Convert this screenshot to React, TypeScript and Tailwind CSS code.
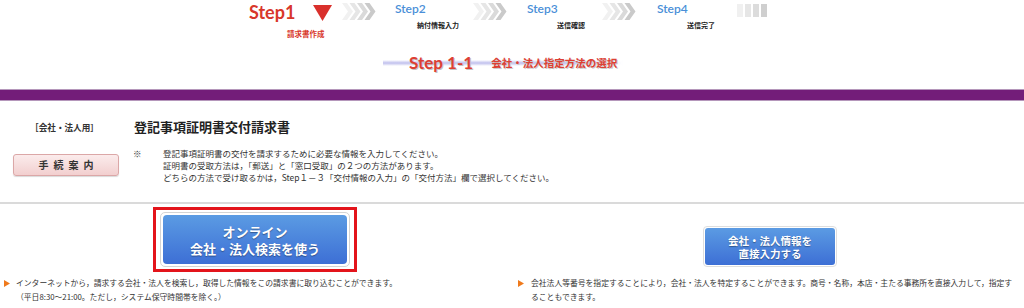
import React from "react";

const jp = "font-['Noto_Sans_CJK_JP','Noto_Sans',sans-serif]";
const latin = "font-['Lato','Noto_Sans_CJK_JP',sans-serif]";

function Chevrons() {
  const cols = ["#f1f1f1", "#e6e6e6", "#dadada", "#cacaca"];
  return (
    <svg width="34" height="17" viewBox="0 0 34 17" className="shrink-0">
      {cols.map((c, i) => {
        const x = i * 7.5;
        return (
          <polygon
            key={i}
            fill={c}
            points={`${x},0 ${x + 5},0 ${x + 11},8.5 ${x + 5},17 ${x},17 ${x + 6},8.5`}
          />
        );
      })}
    </svg>
  );
}

function Bars() {
  return (
    <div className="flex gap-[2px] mt-[4px]">
      <div className="w-[6px] h-[13px] bg-[#f0f0f0]" />
      <div className="w-[6px] h-[13px] bg-[#e6e6e6]" />
      <div className="w-[6px] h-[13px] bg-[#dcdcdc]" />
      <div className="w-[6px] h-[13px] bg-[#cfcfcf]" />
    </div>
  );
}

function StepLabel({ name, sub, width, subOffset }: { name: string; sub: string; width: string; subOffset: string }) {
  return (
    <div className={`flex flex-col ${width}`}>
      <div className={`${latin} text-[12px] leading-[16px] font-semibold text-[#4a8fd8] mt-[1px]`}>{name}</div>
      <div className={`${jp} ${subOffset} mt-[4px] text-[7px] leading-[8px] font-bold text-[#222] whitespace-nowrap`}>
        {sub}
      </div>
    </div>
  );
}

function Bullet() {
  return (
    <svg width="6" height="7" viewBox="0 0 6 7" className="shrink-0 mt-[4px]">
      <polygon points="0,0 6,3.5 0,7" fill="#ef7a1c" />
    </svg>
  );
}

export default function App() {
  return (
    <div className={`w-[1024px] h-[308px] bg-white overflow-hidden ${jp}`}>
      {/* step progress */}
      <div className="flex h-[46px] pl-[249px]">
        <div className="flex flex-col w-[64px]">
          <div className={`${latin} text-[18px] leading-[20px] font-bold text-[#d8372b] mt-[2px]`}>Step1</div>
          <div className="ml-[38px] mt-[7px] text-[7.5px] leading-[9px] font-bold text-[#d8372b] whitespace-nowrap">
            請求書作成
          </div>
        </div>
        <svg width="19" height="16" viewBox="0 0 19 16" className="mt-[5px] shrink-0">
          <polygon points="0,0 19,0 9.5,16" fill="#d9302c" />
        </svg>
        <div className="ml-[10px] mt-[3px]">
          <Chevrons />
        </div>
        <div className="ml-[19px] flex">
          <StepLabel name="Step2" sub="納付情報入力" width="w-[78px]" subOffset="ml-[22px]" />
          <div className="mt-[3px]">
            <Chevrons />
          </div>
        </div>
        <div className="ml-[20px] flex">
          <StepLabel name="Step3" sub="送信確認" width="w-[75px]" subOffset="ml-[30px]" />
          <div className="mt-[3px]">
            <Chevrons />
          </div>
        </div>
        <div className="ml-[21px] flex">
          <StepLabel name="Step4" sub="送信完了" width="w-[80px]" subOffset="ml-[30px]" />
          <Bars />
        </div>
      </div>

      {/* step 1-1 title */}
      <div className="h-[43px] pl-[383px] pt-[7px]">
        <div className="relative w-[240px] h-[20px] flex items-center">
          <div className="absolute left-0 right-0 top-[7px] h-[6px] bg-[linear-gradient(to_bottom,transparent,#c6c6ef_45%,#c6c6ef_55%,transparent)] [mask-image:linear-gradient(to_right,black_80%,transparent)]" />
          <span
            className={`relative ml-[26px] ${latin} text-[17px] leading-[20px] font-bold text-[#dd4034] [text-shadow:1px_1px_0_#c4c4c4]`}
          >
            Step 1-1
          </span>
          <span className="relative ml-[18px] text-[10.5px] leading-[14px] font-bold text-[#dd4034] whitespace-nowrap [text-shadow:1px_1px_0_#cccccc]">
            会社・法人指定方法の選択
          </span>
        </div>
      </div>

      {/* purple rule */}
      <div className="h-[12px] bg-[#731d79] border-y border-[#b597bb]" />

      {/* intro section */}
      <div className="flex h-[101px]">
        <div className="w-[133px] flex flex-col items-center pt-[20px]">
          <div className="text-[8.6px] leading-[12px] font-bold text-[#333] ml-[-4px]">［会社・法人用］</div>
          <button className="mt-[21px] w-[106px] h-[22px] ml-[-1px] rounded-[3px] border border-[#dba7a7] bg-[linear-gradient(to_bottom,#fbecec,#f2cfcf)] shadow-[0_1px_1px_rgba(0,0,0,0.15)] text-[10px] leading-[20px] font-bold text-[#333] tracking-[5px] pl-[5px]">
            手続案内
          </button>
        </div>
        <div className="flex flex-col pt-[18px]">
          <div className="ml-[1px] text-[13px] leading-[16px] font-bold text-[#222]">登記事項証明書交付請求書</div>
          <div className="flex mt-[12px] text-[8.5px] leading-[12px] text-[#333]">
            <div className="w-[30px]">※</div>
            <div>
              登記事項証明書の交付を請求するために必要な情報を入力してください。
              <br />
              証明書の受取方法は，「郵送」と「窓口受取」の２つの方法があります。
              <br />
              どちらの方法で受け取るかは，Step１－３「交付情報の入力」の「交付方法」欄で選択してください。
            </div>
          </div>
        </div>
      </div>

      <div className="h-[2px] bg-[#dadada]" />

      {/* choices */}
      <div className="grid grid-cols-2">
        <div className="flex flex-col">
          <div className="h-[69px] flex items-end justify-center pb-[1px]">
            <div className="ml-[-2px] border-[3px] border-[#e3141b] px-[4px] py-[2px]">
              <div className="rounded-[5px] border border-[#d4d4d4] p-[2px] bg-white">
                <button className="w-[184px] h-[49px] rounded-[4px] bg-[linear-gradient(to_bottom,#5b9be3,#3d6fd5)] text-white font-bold text-[13px] leading-[17px] [text-shadow:0_1px_1px_rgba(0,0,0,0.35)]">
                  オンライン
                  <br />
                  会社・法人検索を使う
                </button>
              </div>
            </div>
          </div>
          <div className="flex pl-[4px] mt-[3px]">
            <Bullet />
            <div className="ml-[6px] text-[7.8px] leading-[14px] text-[#333]">
              インターネットから，請求する会社・法人を検索し，取得した情報をこの請求書に取り込むことができます。
              <br />
              （平日8:30～21:00。ただし，システム保守時間帯を除く。）
            </div>
          </div>
        </div>
        <div className="flex flex-col">
          <div className="h-[69px] flex items-end justify-center pb-[6px]">
            <div className="ml-[4px] rounded-[4px] border border-[#dedede] p-[1px] bg-white">
              <button className="w-[130px] h-[37px] rounded-[3px] bg-[linear-gradient(to_bottom,#5b9be3,#3d6fd5)] text-white font-bold text-[10.5px] leading-[13px] [text-shadow:0_1px_1px_rgba(0,0,0,0.35)]">
                会社・法人情報を
                <br />
                直接入力する
              </button>
            </div>
          </div>
          <div className="flex pl-[6px] mt-[3px]">
            <Bullet />
            <div className="ml-[7px] text-[7.8px] leading-[14px] text-[#333]">
              会社法人等番号を指定することにより，会社・法人を特定することができます。商号・名称，本店・主たる事務所を直接入力して，指定す
              <br />
              ることもできます。
            </div>
          </div>
        </div>
      </div>
    </div>
  );
}
